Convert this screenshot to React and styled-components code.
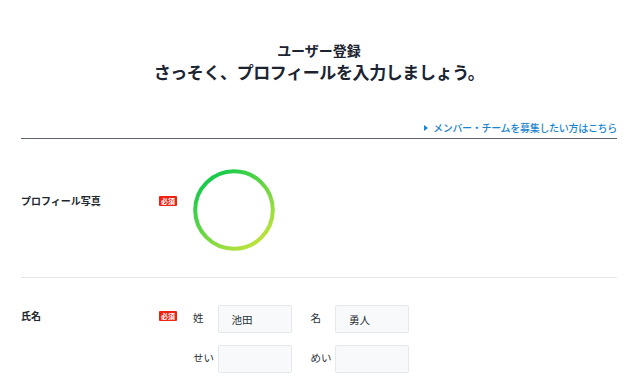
import React, { useState } from "react";
import styled, { createGlobalStyle } from "styled-components";

const GlobalStyle = createGlobalStyle`
  html, body {
    margin: 0;
    padding: 0;
    background: #ffffff;
  }
  body {
    font-family: "Noto Sans CJK JP", "Noto Sans", sans-serif;
    color: #262b33;
  }
`;

const ProfileCircle = () => (
  <svg width="82" height="82" viewBox="0 0 82 82">
    <defs>
      <linearGradient id="ring" x1="0.15" y1="0.05" x2="0.85" y2="0.95">
        <stop offset="0" stopColor="#0fc94e" />
        <stop offset="1" stopColor="#c2e43b" />
      </linearGradient>
    </defs>
    <circle cx="41" cy="41" r="38.8" fill="none" stroke="url(#ring)" strokeWidth="4" />
  </svg>
);

const App = () => {
  const [name, setName] = useState({ sei: "池田", mei: "勇人", seiKana: "", meiKana: "" });

  const handleChange = (key) => (e) => {
    setName({ ...name, [key]: e.target.value });
  };

  return (
    <>
      <GlobalStyle />
      <Page>
        <Header>
          <Title>ユーザー登録</Title>
          <Lead>さっそく、プロフィールを入力しましょう。</Lead>
        </Header>
        <LinkBar>
          <RecruitLink href="#">
            <Arrow />
            メンバー・チームを募集したい方はこちら
          </RecruitLink>
        </LinkBar>

        <Row top={30} bottom={26}>
          <LabelCol offset={24}>
            <Label>プロフィール写真</Label>
            <Badge>必須</Badge>
          </LabelCol>
          <Field>
            <ProfileCircle />
          </Field>
        </Row>

        <Row top={27} bottom={0} last>
          <LabelCol offset={3}>
            <Label>氏名</Label>
            <Badge>必須</Badge>
          </LabelCol>
          <NameGrid>
            <Pair>
              <SubLabel>姓</SubLabel>
              <Input value={name.sei} onChange={handleChange("sei")} />
            </Pair>
            <Pair>
              <SubLabel>名</SubLabel>
              <Input value={name.mei} onChange={handleChange("mei")} />
            </Pair>
            <Pair>
              <SubLabel>せい</SubLabel>
              <Input value={name.seiKana} onChange={handleChange("seiKana")} />
            </Pair>
            <Pair>
              <SubLabel>めい</SubLabel>
              <Input value={name.meiKana} onChange={handleChange("meiKana")} />
            </Pair>
          </NameGrid>
        </Row>
      </Page>
    </>
  );
};

const Page = styled.div`
  padding: 40px 21px 0;
  width: 596px;
`;

const Header = styled.div`
  display: flex;
  flex-direction: column;
  align-items: center;
`;

const Title = styled.h2`
  margin: 0;
  font-size: 14px;
  line-height: 20px;
  font-weight: 700;
  color: #1c2431;
`;

const Lead = styled.h1`
  margin: 0;
  font-size: 17px;
  line-height: 24px;
  font-weight: 700;
  letter-spacing: -0.4px;
  color: #1c2431;
`;

const LinkBar = styled.div`
  display: flex;
  justify-content: flex-end;
  margin-top: 37px;
  padding-bottom: 3px;
  border-bottom: 1px solid #5c6570;
`;

const RecruitLink = styled.a`
  display: flex;
  align-items: center;
  gap: 4px;
  font-size: 10px;
  line-height: 14px;
  letter-spacing: -0.3px;
  font-weight: 500;
  color: #1b84cf;
  text-decoration: none;
`;

const Arrow = styled.span`
  width: 0;
  height: 0;
  margin-right: 1px;
  border-top: 3px solid transparent;
  border-bottom: 3px solid transparent;
  border-left: 4px solid #1b84cf;
`;

const Row = styled.div`
  display: flex;
  align-items: flex-start;
  padding: ${(p) => p.top}px 0 ${(p) => p.bottom}px;
  border-bottom: ${(p) => (p.last ? "none" : "1px solid #e6e6e6")};
`;

const LabelCol = styled.div`
  display: flex;
  align-items: center;
  justify-content: space-between;
  width: 156px;
  margin-top: ${(p) => p.offset}px;
  margin-right: 16px;
`;

const Label = styled.span`
  font-size: 10px;
  line-height: 16px;
  font-weight: 700;
  color: #22272e;
`;

const Badge = styled.span`
  display: inline-flex;
  align-items: center;
  justify-content: center;
  width: 18px;
  height: 10px;
  background: #f2210f;
  color: #ffffff;
  font-size: 7px;
  font-weight: 700;
  line-height: 1;
  border-radius: 1px;
`;

const Field = styled.div`
  display: flex;
`;

const NameGrid = styled.div`
  display: grid;
  grid-template-columns: repeat(2, auto);
  column-gap: 19px;
  row-gap: 12px;
`;

const Pair = styled.div`
  display: flex;
  align-items: center;
`;

const SubLabel = styled.span`
  width: 24.5px;
  font-size: 10.5px;
  line-height: 16px;
  color: #2b3038;
  margin-top: -2px;
`;

const Input = styled.input`
  box-sizing: border-box;
  width: 74px;
  height: 28px;
  padding: 0 13px;
  border: 1px solid #e6e9ec;
  border-radius: 2px;
  background: #f7f9fb;
  font-family: "Noto Sans CJK JP", "Noto Sans", sans-serif;
  font-size: 10.5px;
  color: #2b3038;
  outline: none;
`;

export default App;
